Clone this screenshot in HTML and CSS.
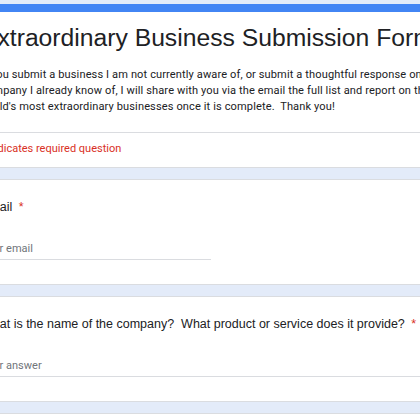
FILE: index.html
```html
<!DOCTYPE html>
<html>
<head>
<meta charset="utf-8">
<link rel="stylesheet" href="styles.css">
</head>
<body>
<div class="form">
  <div class="card header-card">
    <h1 class="title">Extraordinary Business Submission Form</h1>
    <p class="desc"><span class="line">If you submit a business I am not currently aware of, or submit a thoughtful response on a</span><span class="line">company I already know of, I will share with you via the email the full list and report on the</span><span class="line">world's most extraordinary businesses once it is complete.&nbsp; Thank you!</span></p>
    <div class="required-note">* Indicates required question</div>
  </div>
  <div class="card question">
    <div class="q-title">Email <span class="star">*</span></div>
    <div class="input short">Your email</div>
  </div>
  <div class="card question">
    <div class="q-title">What is the name of the company?&nbsp; What product or service does it provide? <span class="star">*</span></div>
    <div class="input long">Your answer</div>
  </div>
  <div class="card question"></div>
</div>
</body>
</html>
```

FILE: styles.css
```css
html, body {
  margin: 0;
  padding: 0;
}
body {
  background: #e3ebf9;
  font-family: Roboto, "Liberation Sans", Arial, sans-serif;
  color: #202124;
  overflow: hidden;
}
.form {
  width: 640px;
  margin-left: -40px;
  padding-top: 4px;
  display: flex;
  flex-direction: column;
  gap: 11px;
}
.card {
  background: #ffffff;
  border-radius: 6px;
  border: 1px solid #dadce0;
  padding: 0 20px;
}
.header-card {
  border-top: 8px solid #4285f4;
  padding-top: 11px;
  padding-bottom: 11px;
}
.title {
  margin: 0;
  font-family: "Liberation Sans", Arial, sans-serif;
  font-weight: normal;
  font-size: 24.7px;
  line-height: 30px;
  color: #202124;
}
.desc {
  margin: 14px -20px 0;
  padding: 0 0 17px 20px;
  font-size: 11.05px;
  line-height: 16px;
  letter-spacing: 0.12px;
  color: #202124;
  border-bottom: 1px solid #dadce0;
}
.line {
  display: block;
  white-space: nowrap;
}
.required-note {
  margin-top: 9px;
  font-size: 11px;
  line-height: 14px;
  color: #d93025;
}
.question {
  padding-top: 19px;
  padding-bottom: 24px;
}
.q-title {
  font-family: "Liberation Sans", Arial, sans-serif;
  font-size: 12.5px;
  line-height: 16px;
  white-space: nowrap;
  color: #202124;
}
.star {
  color: #d93025;
  margin-left: 3px;
}
.input {
  margin-top: 26px;
  font-size: 11px;
  line-height: 16px;
  color: #70757a;
  border-bottom: 1px solid #dadce0;
  padding-bottom: 2px;
}
.short {
  width: 230px;
}
```
